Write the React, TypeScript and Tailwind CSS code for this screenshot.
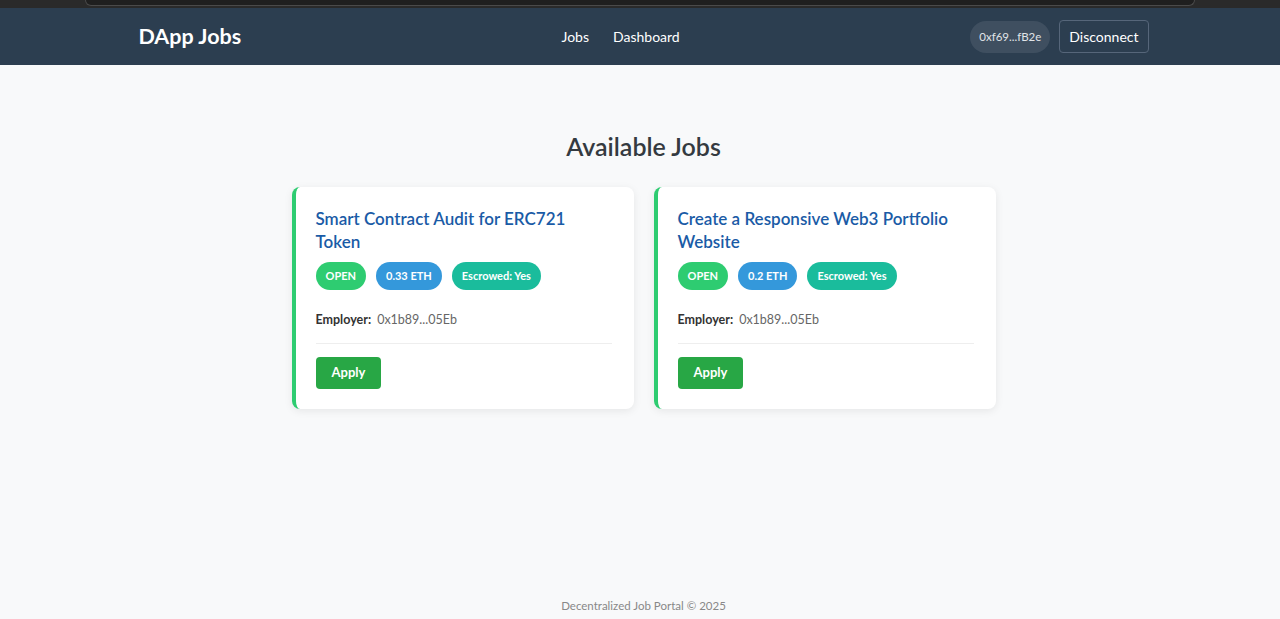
const jobs = [
  { title: "Smart Contract Audit for ERC721 Token", budget: "0.33 ETH", employer: "0x1b89...05Eb" },
  { title: "Create a Responsive Web3 Portfolio Website", budget: "0.2 ETH", employer: "0x1b89...05Eb" },
];

const font = { fontFamily: 'Lato, "Open Sans", sans-serif' };

const JobCard = ({ job }: { job: (typeof jobs)[number] }) => (
  <div className="w-[342px] bg-white rounded-lg border-l-4 border-[#2ecc71] shadow-[0_2px_8px_rgba(0,0,0,0.08)] pl-5 pr-[22px] pt-5 pb-5">
    <h3 className="text-[17px] leading-[23px] font-semibold text-[#1a5ba6]">{job.title}</h3>
    <div className="flex gap-[10px] mt-[9px]">
      <span className="h-7 px-[10px] flex items-center rounded-full bg-[#2ecc71] text-white text-[11px] font-bold">OPEN</span>
      <span className="h-7 px-[10px] flex items-center rounded-full bg-[#3498db] text-white text-[11px] font-bold">{job.budget}</span>
      <span className="h-7 px-[10px] flex items-center rounded-full bg-[#1abc9c] text-white text-[11px] font-bold">Escrowed: Yes</span>
    </div>
    <p className="mt-5 text-[12.5px] leading-5 text-[#666]">
      <span className="font-bold text-[#333] mr-[6px]">Employer:</span>
      {job.employer}
    </p>
    <div className="mt-[13px] border-t border-[#eeeeee] pt-[13px]">
      <button className="h-8 px-4 rounded bg-[#28a745] text-white text-[13px] font-bold">Apply</button>
    </div>
  </div>
);

export default function App() {
  return (
    <div className="min-h-screen flex flex-col bg-[#f8f9fa]" style={font}>
      <div className="h-2 bg-[#2a2a2a]">
        <div className="mx-[85px] h-[6px] rounded-b-[10px] border-x border-b border-[#4a4a4a] bg-[#1f1f1f]" />
      </div>
      <header className="h-[57px] bg-[#2c3e50] pl-[7px]">
        <div className="w-[1010px] h-full mx-auto flex items-center">
          <span className="w-[423px] text-[21.5px] font-bold text-white">DApp Jobs</span>
          <nav className="flex gap-6 text-[14px] text-white">
            <a>Jobs</a>
            <a>Dashboard</a>
          </nav>
          <div className="ml-auto flex items-center gap-[9px]">
            <span className="h-8 px-[9px] flex items-center rounded-full bg-[#3f4f60] text-[11.5px] text-[#e0e4e8]">0xf69...fB2e</span>
            <button className="h-[33px] px-[9px] rounded border border-[#56667a] text-[14px] text-white">Disconnect</button>
          </div>
        </div>
      </header>
      <main className="flex-1 pl-[7px] pt-[65px]">
        <h2 className="text-center text-[25px] leading-8 font-semibold text-[#343a40]">Available Jobs</h2>
        <div className="flex justify-center gap-5 mt-[25px]">
          {jobs.map((j) => (
            <JobCard key={j.title} job={j} />
          ))}
        </div>
      </main>
      <footer className="pl-[7px] pb-[5px] text-center text-[11.5px] leading-4 text-[#888]">
        Decentralized Job Portal © 2025
      </footer>
    </div>
  );
}
